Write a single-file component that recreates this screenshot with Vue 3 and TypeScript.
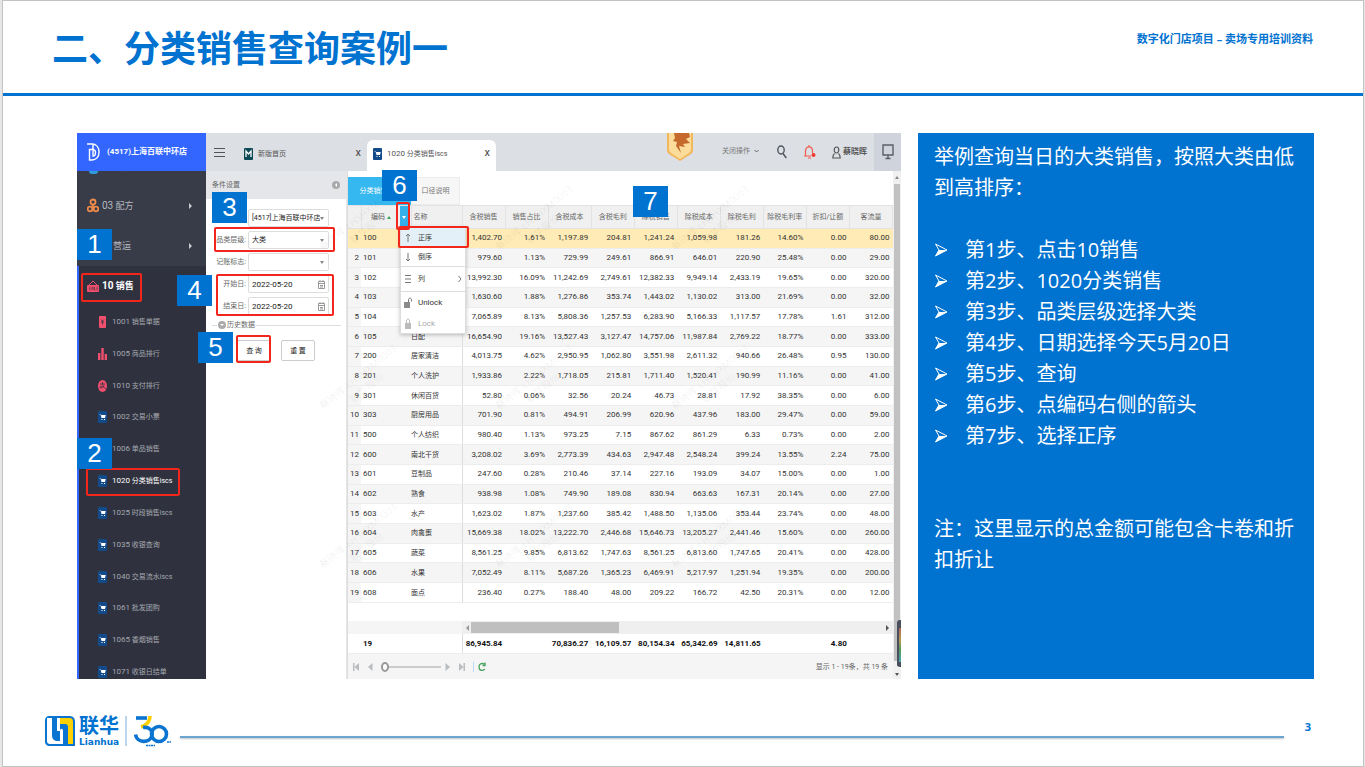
<script setup lang="ts">
import { ref } from 'vue'

interface MenuItem { code: string; name: string; icon: 'doc' | 'bars' | 'pay' | 'cart'; active?: boolean }
interface Mark { x: number; y: number; w: number; h: number }
interface Badge { n: number; x: number; y: number }

const menu: MenuItem[] = [
  { code: '1001', name: '销售单据', icon: 'doc' },
  { code: '1005', name: '商品排行', icon: 'bars' },
  { code: '1010', name: '支付排行', icon: 'pay' },
  { code: '1002', name: '交易小票', icon: 'cart' },
  { code: '1006', name: '单品销售', icon: 'cart' },
  { code: '1020', name: '分类销售iscs', icon: 'cart', active: true },
  { code: '1025', name: '时段销售iscs', icon: 'cart' },
  { code: '1035', name: '收银查询', icon: 'cart' },
  { code: '1040', name: '交易流水iscs', icon: 'cart' },
  { code: '1061', name: '批发团购', icon: 'cart' },
  { code: '1065', name: '香烟销售', icon: 'cart' },
  { code: '1071', name: '收银日结单', icon: 'cart' },
]

const columns = ['含税销售', '销售占比', '含税成本', '含税毛利', '除税销售', '除税成本', '除税毛利', '除税毛利率', '折扣/让额', '客流量']

const rows: string[][] = [
  ['100', '', '1,402.70', '1.61%', '1,197.89', '204.81', '1,241.24', '1,059.98', '181.26', '14.60%', '0.00', '80.00'],
  ['101', '', '979.60', '1.13%', '729.99', '249.61', '866.91', '646.01', '220.90', '25.48%', '0.00', '29.00'],
  ['102', '', '13,992.30', '16.09%', '11,242.69', '2,749.61', '12,382.33', '9,949.14', '2,433.19', '19.65%', '0.00', '320.00'],
  ['103', '', '1,630.60', '1.88%', '1,276.86', '353.74', '1,443.02', '1,130.02', '313.00', '21.69%', '0.00', '32.00'],
  ['104', '', '7,065.89', '8.13%', '5,808.36', '1,257.53', '6,283.90', '5,166.33', '1,117.57', '17.78%', '1.61', '312.00'],
  ['105', '日配', '16,654.90', '19.16%', '13,527.43', '3,127.47', '14,757.06', '11,987.84', '2,769.22', '18.77%', '0.00', '333.00'],
  ['200', '居家清洁', '4,013.75', '4.62%', '2,950.95', '1,062.80', '3,551.98', '2,611.32', '940.66', '26.48%', '0.95', '130.00'],
  ['201', '个人洗护', '1,933.86', '2.22%', '1,718.05', '215.81', '1,711.40', '1,520.41', '190.99', '11.16%', '0.00', '41.00'],
  ['301', '休闲百货', '52.80', '0.06%', '32.56', '20.24', '46.73', '28.81', '17.92', '38.35%', '0.00', '6.00'],
  ['303', '厨房用品', '701.90', '0.81%', '494.91', '206.99', '620.96', '437.96', '183.00', '29.47%', '0.00', '59.00'],
  ['500', '个人纺织', '980.40', '1.13%', '973.25', '7.15', '867.62', '861.29', '6.33', '0.73%', '0.00', '2.00'],
  ['600', '南北干货', '3,208.02', '3.69%', '2,773.39', '434.63', '2,947.48', '2,548.24', '399.24', '13.55%', '2.24', '75.00'],
  ['601', '豆制品', '247.60', '0.28%', '210.46', '37.14', '227.16', '193.09', '34.07', '15.00%', '0.00', '1.00'],
  ['602', '熟食', '938.98', '1.08%', '749.90', '189.08', '830.94', '663.63', '167.31', '20.14%', '0.00', '27.00'],
  ['603', '水产', '1,623.02', '1.87%', '1,237.60', '385.42', '1,488.50', '1,135.06', '353.44', '23.74%', '0.00', '48.00'],
  ['604', '肉禽蛋', '15,669.38', '18.02%', '13,222.70', '2,446.68', '15,646.73', '13,205.27', '2,441.46', '15.60%', '0.00', '260.00'],
  ['605', '蔬菜', '8,561.25', '9.85%', '6,813.62', '1,747.63', '8,561.25', '6,813.60', '1,747.65', '20.41%', '0.00', '428.00'],
  ['606', '水果', '7,052.49', '8.11%', '5,687.26', '1,365.23', '6,469.91', '5,217.97', '1,251.94', '19.35%', '0.00', '200.00'],
  ['608', '面点', '236.40', '0.27%', '188.40', '48.00', '209.22', '166.72', '42.50', '20.31%', '0.00', '12.00'],
]
const totals = ['86,945.84', '', '70,836.27', '16,109.57', '80,154.34', '65,342.69', '14,811.65', '', '4.80', '']

const steps = [
  '第1步、点击10销售',
  '第2步、1020分类销售',
  '第3步、品类层级选择大类',
  '第4步、日期选择今天5月20日',
  '第5步、查询',
  '第6步、点编码右侧的箭头',
  '第7步、选择正序',
]

const marks: Mark[] = [
  { x: 4, y: 140, w: 61, h: 29 },
  { x: 9, y: 335, w: 94, h: 28 },
  { x: 137, y: 94, w: 121, h: 25 },
  { x: 139, y: 141, w: 118, h: 42 },
  { x: 159, y: 202, w: 35, h: 28 },
  { x: 319, y: 69, w: 14, h: 28 },
  { x: 321, y: 93, w: 71, h: 22 },
]
const badges: Badge[] = [
  { n: 1, x: 0, y: 96 },
  { n: 2, x: 0, y: 305 },
  { n: 3, x: 135, y: 59 },
  { n: 4, x: 100, y: 142 },
  { n: 5, x: 121, y: 199 },
  { n: 6, x: 305, y: 37 },
  { n: 7, x: 556, y: 53 },
]

const store = ref('[4517]上海百联中环店')
const level = ref('大类')
const flag = ref('')
const startDate = ref('2022-05-20')
const endDate = ref('2022-05-20')
const page = ref(0)
</script>

<template>
  <div class="slide">
    <header class="head">
      <h1>二、分类销售查询案例一</h1>
      <p>数字化门店项目 – 卖场专用培训资料</p>
    </header>

    <main class="body">
      <section class="app">
        <aside class="side">
          <div class="brand">
            <svg viewBox="0 0 14 20" width="14" height="20" fill="none" stroke="#fff" stroke-width="1.4">
              <path d="M1 2h5c4 0 7 3 7 8s-3 8-7 8H3.500V7.500H6c2.500 0 3.500 1.200 3.500 3S8.500 14 7 14V2" />
            </svg>
            <b>(4517)上海百联中环店</b>
          </div>
          <div class="cut"><i></i><span>生鲜</span></div>
          <a class="group" href="#">
            <svg viewBox="0 0 12 16" width="12" height="16" fill="none" stroke="#ee8a4a" stroke-width="1.800">
              <circle cx="6" cy="4" r="2.500" /><circle cx="3" cy="11" r="2.300" /><circle cx="9" cy="11" r="2.300" /><path d="M6 6v4" />
            </svg>
            <span class="lbl"><span class="code">03</span> 配方</span><i class="tri"></i>
          </a>
          <a class="group" href="#"><span class="lbl late">营运</span><i class="tri"></i></a>
          <a class="group open" href="#">
            <svg viewBox="0 0 12 14" width="12" height="14">
              <path d="M2 6l4-4 4 4" fill="none" stroke="#f0506e" /><rect x="0" y="6" width="12" height="7" rx="1" fill="#f0506e" />
              <path d="M2 8h1.500M2 9.500h1.500M2 11h1.500M5 11V8.500h1.200V11M7.500 8v3h1M9.500 8H11M9.500 9.500H11M9.500 11H11" stroke="#3b2e3c" stroke-width=".6" fill="none" />
            </svg>
            <b class="lbl"><span class="code">10</span> 销售</b>
          </a>
          <nav class="subs">
            <a v-for="m in menu" :key="m.code" href="#" :class="{ active: m.active }">
              <svg v-if="m.icon === 'cart'" viewBox="0 0 9 12" width="9" height="12">
                <rect width="9" height="12" rx="1" fill="#124a8a" /><path d="M1 3h1.500l1 4h3.500l.8-3H3z" fill="#fff" /><path d="M3.500 8.500h1M6 8.500h1" stroke="#fff" />
              </svg>
              <svg v-else-if="m.icon === 'doc'" viewBox="0 0 9 12" width="9" height="12">
                <rect x="1" width="7" height="12" rx="1" fill="#f0506e" /><path d="M3 3.500l1.500 1.500L6 3.500M4.500 5v3.500M3 6h3" stroke="#2f323e" stroke-width=".8" fill="none" />
              </svg>
              <svg v-else-if="m.icon === 'bars'" viewBox="0 0 9 12" width="9" height="12">
                <path d="M0 5h2.400v7H0zM3.300 0h2.400v12H3.300zM6.600 6H9v6H6.600z" fill="#f0506e" />
              </svg>
              <svg v-else viewBox="0 0 9 12" width="9" height="12">
                <ellipse cx="4.500" cy="6" rx="4.500" ry="6" fill="#f0506e" /><path d="M2 4h5M4.500 2v3M6 5c-1 3-4 4-4 2s4 0 6 2" stroke="#2f323e" stroke-width=".8" fill="none" />
              </svg>
              <span><span class="code">{{ m.code }}</span> {{ m.name }}</span>
            </a>
          </nav>
        </aside>

        <div class="work">
          <div class="top">
            <button class="burger" aria-label="菜单"><i></i><i></i><i></i></button>
            <div class="tab home">
              <svg viewBox="0 0 9 12" width="9" height="12"><rect width="9" height="12" rx="1" fill="#0c4a55" /><path d="M2 9V3l2.500 3L7 3v6" stroke="#fff" stroke-width="1.300" fill="none" /></svg>
              <span>新版首页</span><button class="close">x</button>
            </div>
            <div class="tab on">
              <svg viewBox="0 0 9 12" width="9" height="12"><rect width="9" height="12" rx="1" fill="#124a8a" /><path d="M1 3h1.500l1 4h3.500l.8-3H3z" fill="#fff" /><path d="M3.500 8.500h1M6 8.500h1" stroke="#fff" /></svg>
              <span><span class="code">1020</span> 分类销售iscs</span><button class="close">x</button>
            </div>
            <div class="tools">
              <svg class="medal" viewBox="0 0 28 28" width="28" height="28">
                <path d="M1 0h26v17c0 2-1 3-2 4L14 28 3 21c-1-1-2-2-2-4z" fill="#f3b75c" /><path d="M3 0h22v16c0 2-1 3-2 4l-9 6-9-6c-1-1-2-2-2-4z" fill="#fbdc9b" />
                <path d="M8 0h15l1 4-4 2 4 4-7 1 2 3-6-1 2 7-5-7 1-4-4-1 2-3z" fill="#c56a2c" />
              </svg>
              <button class="ops">关闭操作 <svg viewBox="0 0 5 4" width="5" height="4" fill="none" stroke="#666"><path d="M.5 1l2 2 2-2" /></svg></button>
              <svg class="find" viewBox="0 0 10 14" width="10" height="14" fill="none" stroke="#50555c" stroke-width="1.400"><ellipse cx="4" cy="5" rx="3.200" ry="4" /><path d="M6 8.500l3.300 4.500" /></svg>
              <svg class="bell" viewBox="0 0 12 16" width="12" height="16" fill="none" stroke="#f25a4b" stroke-width="1.200"><path d="M5 1v1.500M0 12h7M1.500 12V7c0-5.500 7-5.500 7 0v2M4 14h3" /><circle cx="9.500" cy="11" r="2" fill="#f23a2c" stroke="none" /></svg>
              <svg class="who" viewBox="0 0 9 13" width="9" height="13" fill="none" stroke="#555" stroke-width="1.200"><ellipse cx="4.500" cy="4" rx="2.300" ry="3" /><path d="M2.500 7.500C1 8.500.8 10 .8 12h7.400c0-2-.2-3.500-1.700-4.500" /></svg>
              <b>蔡晓晖</b>
              <button class="screen" aria-label="屏幕"><svg viewBox="0 0 12 16" width="12" height="16" fill="none" stroke="#5b6068" stroke-width="1.400"><path d="M1 1h10v10H1zM6 11v3M3.500 14.500h5" /></svg></button>
            </div>
          </div>

          <form class="filter" @submit.prevent>
            <div class="cap"><span>条件设置</span><i class="dot"><i></i></i></div>
            <div class="fields">
              <div class="f"><span></span><span class="box"><select v-model="store" aria-label="门店"><option>[4517]上海百联中环店</option></select></span></div>
              <div class="f"><label for="lv">品类层级:</label><span class="box"><select id="lv" v-model="level"><option>大类</option></select></span></div>
              <div class="f"><label for="fl">记账标志:</label><span class="box"><select id="fl" v-model="flag"><option value=""></option></select></span></div>
              <div class="f"><label for="sd">开始日:</label><span class="box date"><input id="sd" v-model="startDate" type="text" /><svg viewBox="0 0 7 9" width="7" height="9" fill="none" stroke="#999"><path d="M.5 1.500h6v7h-6zM.5 3.500h6M2 0v2M5 0v2M2 5.500h3M2 7h3" /></svg></span></div>
              <div class="f"><label for="ed">结束日:</label><span class="box date"><input id="ed" v-model="endDate" type="text" /><svg viewBox="0 0 7 9" width="7" height="9" fill="none" stroke="#999"><path d="M.5 1.500h6v7h-6zM.5 3.500h6M2 0v2M5 0v2M2 5.500h3M2 7h3" /></svg></span></div>
            </div>
            <div class="hist"><i class="dot down"><i></i></i><span>历史数据</span></div>
            <div class="acts"><button type="submit">查 询</button><button type="reset">重 置</button></div>
          </form>

          <div class="data">
            <div class="pane">
              <div class="subtabs"><button class="on">分类销售</button><button>口径说明</button></div>
              <table class="grid">
                <colgroup><col class="c-n" /><col class="c-code" /><col class="c-name" /><col v-for="c in columns" :key="c" /></colgroup>
                <thead>
                  <tr>
                    <th></th>
                    <th class="codeh"><span>编码<i class="asc"></i></span><button aria-label="列菜单"><i></i></button></th>
                    <th class="nameh">名称</th>
                    <th v-for="c in columns" :key="c">{{ c }}</th>
                  </tr>
                </thead>
                <tbody>
                  <tr v-for="(r, i) in rows" :key="r[0]">
                    <td class="n">{{ i + 1 }}</td>
                    <td class="l">{{ r[0] }}</td>
                    <td class="name">{{ r[1] }}</td>
                    <td v-for="(v, j) in r.slice(2)" :key="j">{{ v }}</td>
                  </tr>
                </tbody>
              </table>
              <div class="hbar"><div class="track"><i class="la"></i><i class="thumb"></i><i class="ra"></i></div></div>
              <table class="sum">
                <colgroup><col class="c-n" /><col class="c-code" /><col class="c-name" /><col v-for="c in columns" :key="c" /></colgroup>
                <tbody><tr><td></td><td class="l">19</td><td class="name"></td><td v-for="(t, i) in totals" :key="i">{{ t }}</td></tr></tbody>
              </table>
              <div class="pager">
                <button aria-label="首页"><svg viewBox="0 0 6 8" width="6" height="8" fill="#b9bcc0"><path d="M0 0h1.500v8H0zM6 0v8L1.500 4z" /></svg></button>
                <button aria-label="上一页"><svg viewBox="0 0 6 8" width="6" height="8" fill="#b9bcc0"><path d="M5.500 0v8L1 4z" /></svg></button>
                <input v-model="page" type="range" min="0" max="10" aria-label="页码" />
                <button aria-label="下一页"><svg viewBox="0 0 6 8" width="6" height="8" fill="#b9bcc0"><path d="M.5 0v8L5 4z" /></svg></button>
                <button aria-label="末页"><svg viewBox="0 0 6 8" width="6" height="8" fill="#b9bcc0"><path d="M4.500 0H6v8H4.500zM0 0v8l4.500-4z" /></svg></button>
                <i class="bar"></i>
                <button aria-label="刷新"><svg viewBox="0 0 8 10" width="8" height="10" fill="none" stroke="#4aa564" stroke-width="1.400"><path d="M6.500 2.500C4.500.5 1 1.500 1 5s3.500 4.500 5.800 2" /><path d="M7 .5v3H4.500" /></svg></button>
                <span>显示 1 - 19条，共 19 条</span>
              </div>
            </div>
            <div class="vbar"><i class="ua"></i><i class="thumb"></i><i class="da"></i><i class="gauge"></i></div>
          </div>
        </div>

        <div class="water" aria-hidden="true"><span v-for="n in 9" :key="n">蔡晓晖-LHSHXM0003<br />联华股份</span></div>

        <ul class="menu">
          <li class="hot"><svg viewBox="0 0 8 10" width="8" height="10"><path d="M4 1v8M2 3l2-2 2 2" /></svg>正序</li>
          <li><svg viewBox="0 0 8 10" width="8" height="10"><path d="M4 1v8M2 7l2 2 2-2" /></svg>倒序</li>
          <li class="sep cols"><svg viewBox="0 0 8 10" width="8" height="10"><path d="M1 1.500h6M1 5h6M1 8.500h6" /></svg>列<svg class="more" viewBox="0 0 4 8" width="4" height="8"><path d="M.5 1l2.500 3L.5 7" /></svg></li>
          <li class="sep tall"><svg viewBox="0 0 8 12" width="8" height="12"><path d="M0 5h6v6H0z" fill="#8a8a8a" stroke="none" /><path d="M4.500 5V3c0-2.500 3-2.500 3 0v1.500" /></svg><span class="code">Unlock</span></li>
          <li class="off"><svg viewBox="0 0 8 12" width="8" height="12"><path d="M1 5h6v6H1z" fill="#bbb" stroke="none" /><path d="M2.500 5V3c0-2.500 3-2.500 3 0v2" stroke="#bbb" /></svg><span class="code">Lock</span></li>
        </ul>

        <i v-for="(m, i) in marks" :key="i" class="mark" :style="{ left: m.x + 'px', top: m.y + 'px', width: m.w + 'px', height: m.h + 'px' }"></i>
        <span v-for="b in badges" :key="b.n" class="badge" :style="{ left: b.x + 'px', top: b.y + 'px' }">{{ b.n }}</span>
      </section>

      <section class="notes">
        <p>举例查询当日的大类销售，按照大类由低到高排序：</p>
        <ul>
          <li v-for="s in steps" :key="s">
            <svg viewBox="0 0 14 14" width="14" height="14"><path d="M1.500 1L13 7 1.500 13 5 7z" fill="none" stroke="#fff" /><path d="M5 7h8L1.500 13z" fill="#fff" /></svg>{{ s }}
          </li>
        </ul>
        <p>注：这里显示的总金额可能包含卡卷和折扣折让</p>
      </section>
    </main>

    <footer class="foot">
      <svg viewBox="0 0 30 30" width="30" height="30">
        <path d="M4 0h20c4 0 6 2 6 6v24H4c-2 0-4-2-4-4V4c0-2 2-4 4-4z" fill="#0b74d1" />
        <path d="M2 2h5v17c0 4 2 6 6 6h2v3H5c-2 0-3-1-3-3z" fill="#fff" />
        <path d="M12 2h3v13h-3z" fill="#fff" />
        <path d="M15 2h9c3 0 4 1 4 4v22h-5V11c0-2-1-3-3-3h-5z" fill="#fdd000" />
        <path d="M15 15c0-3 3-3 3 0v13h-3z" fill="#fff" />
      </svg>
      <div class="word"><b>联华</b><small>Lianhua</small></div>
      <i class="div"></i>
      <svg viewBox="0 0 38 31" width="38" height="31" fill="none">
        <path d="M2 2h11" stroke="#0b74d1" stroke-width="3.600" /><path d="M16 0c0 6-3 9-9 11" stroke="#fdd000" stroke-width="3.600" />
        <path d="M9 11.500c6-1 10 3 9 8-2 8-15 8-16.500-1" stroke="#0b74d1" stroke-width="3.600" /><circle cx="25" cy="18" r="7.500" stroke="#0b74d1" stroke-width="3.600" />
        <path d="M33 26h4M12 29.500h9" stroke="#0b74d1" stroke-width="1.400" stroke-dasharray="2 .5" />
      </svg>
      <i class="rule"></i>
      <b class="num">3</b>
    </footer>
  </div>
</template>

<style>
body { background: #e6e6e6; }
</style>

<style scoped>
* { box-sizing: border-box; }
h1, p, ul { margin: 0; padding: 0; }
ul { list-style: none; }
button { border: 0; padding: 0; margin: 0; background: none; font: inherit; color: inherit; }
a { text-decoration: none; color: inherit; }
svg { flex: none; display: block; }
.slide { margin: 0 1px 0 2px; min-height: 767px; background: #fff; border: 1px solid #c3c3c3; font-family: "Open Sans", "Noto Sans CJK SC", sans-serif; }
.head { display: flex; justify-content: space-between; height: 95px; border-bottom: 3px solid #0072d0; padding: 0 50px 0 49px; color: #0072d0; }
.head h1 { font-size: 36px; line-height: 96px; font-weight: 700; }
.head p { font-size: 11px; line-height: 76px; font-weight: 700; }
.body { display: grid; grid-template-columns: minmax(0, 824fr) minmax(0, 396fr); gap: 17px; margin: 37px 49px 0 74px; }
.app { position: relative; height: 546px; display: flex; overflow: hidden; font: 7px/12px Roboto, "Noto Sans CJK SC", sans-serif; color: #333; background: #fff; }
.code { font-size: 8px; }

.side { width: 129px; flex: none; background: #383c49; color: #b5b8bf; overflow: hidden; }
.brand { height: 38px; background: #3366ff; color: #fff; display: flex; align-items: center; gap: 7px; padding-left: 9px; font-size: 8px; white-space: nowrap; }
.cut { height: 15px; padding-left: 12px; display: flex; gap: 14px; overflow: hidden; }
.cut i { width: 9px; height: 3px; background: #2f9bd8; border-radius: 0 0 4px 4px; }
.cut span { line-height: 12px; height: 3px; overflow: hidden; display: flex; align-items: flex-end; font-size: 8px; }
.group { height: 40px; display: flex; align-items: center; gap: 3px; padding: 0 14px 0 10px; font-size: 9px; }
.group .code { font-size: 10px; }
.late { padding-left: 26px; }
.lbl { flex: 1; }
.tri { border: 3px solid transparent; border-left: 3px solid #c8cad0; border-right: 0; }
.open { background: #2f323e; color: #fff; border-left: 2px solid #3366ff; padding-left: 8px; }
.subs { height: 382px; display: flex; flex-direction: column; background: #2f323e; border-left: 2px solid #3366ff; }
.subs a { flex: 1; display: flex; align-items: center; gap: 5px; padding-left: 19px; color: #a5a8b0; white-space: nowrap; }
.subs a.active { color: #fff; }

.work { flex: 1; min-width: 0; display: grid; grid-template: 38px 1fr / 141px minmax(0, 1fr); }
.top { grid-column: 1 / 3; background: #dcdfe4; display: flex; align-items: stretch; }
.burger { width: 11px; margin-left: 8px; display: flex; flex-direction: column; justify-content: center; gap: 3px; }
.burger i { height: 1px; background: #555; }
.tab { display: flex; align-items: center; gap: 5px; color: #555; }
.tab span { white-space: nowrap; }
.close { margin-left: auto; padding-bottom: 2px; font-size: 11px; color: #444; }
.home { width: 117px; margin-left: 19px; padding-top: 3px; }
.on.tab { width: 129px; margin: 7px 0 0 6px; padding: 0 6px 4px 6px; background: #fff; border-radius: 6px 6px 0 0; }
.tools { flex: 1; display: flex; align-items: center; justify-content: flex-end; color: #555; }
.tools b { font-size: 8px; margin: 0 7px 0 2px; }
.medal { align-self: flex-start; margin-right: 28px; }
.ops { display: flex; align-items: center; gap: 4px; margin-right: 18px; padding-bottom: 2px; color: #777; }
.find { margin-right: 17px; }
.bell { margin-right: 16px; }
.screen { width: 27px; align-self: stretch; background: #cfd3db; display: flex; align-items: center; justify-content: center; }

.filter { border-right: 1px solid #e6e6e6; }
.cap { height: 28px; background: #e4e6e9; display: flex; align-items: center; justify-content: space-between; padding: 0 6px; color: #666; }
.dot { width: 8px; height: 8px; flex: none; border-radius: 50%; background: #aaa; display: flex; align-items: center; justify-content: center; }
.dot i { border: 2px solid transparent; border-right-color: #fff; border-left: 0; }
.dot.down i { border: 2px solid transparent; border-top-color: #fff; border-bottom: 0; }
.fields { padding: 10px 0 0 6px; display: flex; flex-direction: column; gap: 4px; }
.f { display: grid; grid-template-columns: 34px 81px; gap: 2px; height: 18px; align-items: center; }
.f label { text-align: right; color: #666; white-space: nowrap; }
.box { height: 18px; border: 1px solid #ddd; border-radius: 2px; display: flex; align-items: center; background: #fff; }
.box select { appearance: none; border: 0; background: none; flex: 1; min-width: 0; height: 16px; padding: 0 0 0 3px; font: inherit; color: #222; }
.box:not(.date)::after { content: ""; border: 2px solid transparent; border-top: 3px solid #888; border-bottom: 0; margin-right: 4px; }
.box input { border: 0; background: none; flex: 1; min-width: 0; height: 16px; padding: 0 0 0 3px; font: inherit; font-size: 8px; color: #222; }
.box svg { margin-right: 3px; }
.hist { display: flex; align-items: center; gap: 1px; height: 20px; padding-left: 6px; color: #666; }
.hist::before { content: ""; width: 5px; height: 1px; background: #ddd; }
.hist::after { content: ""; flex: 1; height: 1px; background: #ddd; margin-right: 5px; }
.acts { display: flex; gap: 10px; margin: 5px 0 0 31px; }
.acts button { width: 34px; height: 21px; border: 1px solid #ccc; border-radius: 2px; font-size: 7px; color: #222; background: #fff; }

.data { display: flex; min-width: 0; }
.pane { flex: 1; min-width: 0; display: flex; flex-direction: column; border-left: 1px solid #ddd; }
.subtabs { height: 34px; display: flex; align-items: flex-end; }
.subtabs button { width: 63px; height: 28px; color: #777; background: #f6f6f6; border: 1px solid #ececec; }
.subtabs button:last-child { width: 49px; }
.subtabs .on { background: #35b7ef; color: #fff; border-color: #35b7ef; padding-right: 12px; }
table { width: 100%; table-layout: fixed; border-collapse: collapse; }
.c-n { width: 13px; }
.c-code { width: 50px; }
.c-name { width: 51px; }
.grid { height: 398px; }
.grid thead tr { height: 23px; }
th { background: #f0f0f0; font-weight: 400; color: #666; border: 1px solid #e2e2e2; border-left: 0; padding: 0; white-space: nowrap; }
th.nameh { text-align: left; padding-left: 2px; }
.codeh span { padding: 0 10px 0 0; display: inline-flex; align-items: center; gap: 2px; }
.codeh { position: relative; }
.asc { border: 2px solid transparent; border-bottom: 3px solid #3aa655; border-top: 0; }
.codeh button { position: absolute; right: 2px; top: 0; bottom: 0; width: 9px; background: #35b0ea; }
.codeh button i { display: block; margin: 0 auto; width: 4px; border: 2px solid transparent; border-top: 3px solid #fff; border-bottom: 0; }
td { padding: 0 3px 0 0; text-align: right; font-size: 8px; line-height: 12px; border-bottom: 1px solid #ededed; white-space: nowrap; }
td.n { background: #f5f5f5; padding-right: 2px; }
td.l { text-align: left; padding-left: 2px; }
td.name { text-align: left; font-size: 7px; border-right: 1px solid #ddd; }
.grid tbody tr:nth-child(even) { background: #f5f5f5; }
.grid tbody tr:first-child, .grid tbody tr:first-child .n { background: #ffebb5; }
.hbar { height: 13px; margin-top: 18px; background: #f5f5f5; padding-left: 114px; }
.track { height: 13px; background: #efefef; display: flex; align-items: center; padding: 0 4px; }
.track .thumb { width: 148px; height: 11px; background: #bfbfbf; margin: 0 auto 0 2px; }
.la { border: 3px solid transparent; border-right-color: #999; border-left: 0; }
.ra { border: 3px solid transparent; border-left-color: #555; border-right: 0; }
.sum { height: 20px; font-weight: 700; color: #111; }
.pager { flex: 1; background: #f5f5f5; display: flex; align-items: center; padding: 0 5px; }
.pager button { width: 8px; margin-right: 6px; }
.pager input { appearance: none; width: 60px; height: 10px; margin: 0 4px 0 0; background: linear-gradient(#ccc, #ccc) center / 100% 2px no-repeat; }
.pager input::-webkit-slider-thumb { appearance: none; width: 8px; height: 10px; border: 2px solid #999; border-radius: 50%; background: #fff; }
.pager .bar { width: 1px; height: 10px; background: #b9dcf6; margin-right: 4px; }
.pager span { margin-left: auto; font-size: 7px; color: #666; }
.vbar { width: 8px; background: #f0f0f0; position: relative; display: flex; flex-direction: column; align-items: center; padding: 5px 0 3px; gap: 5px; }
.vbar .thumb { flex: 1; width: 6px; background: #c1c1c1; margin-bottom: 7px; }
.ua { border: 2px solid transparent; border-bottom: 3px solid #888; border-top: 0; }
.da { border: 2px solid transparent; border-top: 3px solid #555; border-bottom: 0; }
.gauge { position: absolute; right: 0; bottom: 12px; width: 4px; height: 47px; background: linear-gradient(#b0665a, #b89a50 35%, #4f9a62 65%, #4aa7b0); border: 2px solid #4a4f5c; border-width: 8px 0 5px 2px; border-radius: 3px 0 0 3px; }

.water { position: absolute; left: 197px; top: 10px; display: grid; grid-template-columns: repeat(3, 176px); grid-auto-rows: 159px; pointer-events: none; }
.water span { place-self: center; transform: rotate(-39deg); font: 10px/14px "Open Sans", "Noto Sans CJK SC", sans-serif; color: rgba(0, 0, 0, .07); text-align: center; white-space: nowrap; }
.menu { position: absolute; left: 323px; top: 94px; width: 66px; background: #fff; border: 1px solid #ddd; box-shadow: 0 1px 4px rgba(0, 0, 0, .25); color: #333; }
.menu li { display: flex; align-items: center; gap: 6px; height: 19px; padding-left: 3px; }
.menu svg { fill: none; stroke: #777; }
.menu .hot { background: #e3f0f7; }
.menu .cols { height: 25px; }
.menu .tall { height: 23px; }
.menu .sep { border-top: 1px solid #ddd; }
.menu .more { margin: 0 3px 0 auto; }
.menu .off { color: #aaa; }
.mark { position: absolute; border: 2px solid #f2261a; border-radius: 2px; }
.badge { position: absolute; width: 35px; height: 31px; background: #0072d0; color: #fff; font: 26px/31px "Liberation Sans", sans-serif; text-align: center; }

.notes { background: #0072d0; color: #fff; font-size: 20px; line-height: 31px; padding: 8px 16px 0; }
.notes ul { margin: 31px 0 62px; }
.notes li { display: flex; align-items: center; gap: 17px; }

.foot { display: flex; align-items: center; height: 44px; margin: 30px 49px 0 42px; color: #0072d0; }
.word { margin-left: 4px; width: 41px; display: flex; flex-direction: column; }
.word b { font-size: 20px; line-height: 22px; }
.word small { font: 700 9px/10px "DejaVu Sans", sans-serif; }
.div { width: 2px; height: 30px; margin: 0 7px 0 5px; background: #b9d5f0; }
.rule { flex: 1; height: 2px; margin: 11px 0 0 8px; background: #6aa5d2; box-shadow: 0 1px 2px rgba(0, 0, 0, .25); }
.num { width: 30px; padding: 0 3px 10px 0; text-align: right; font-size: 11px; }
</style>
